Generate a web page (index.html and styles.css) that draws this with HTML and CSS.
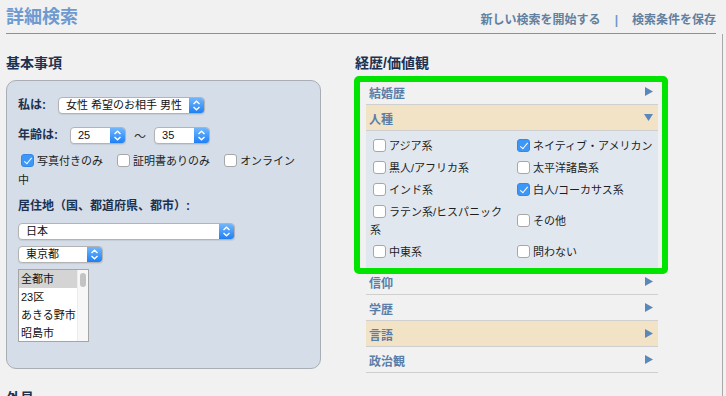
FILE: index.html
```html
<!DOCTYPE html>
<html lang="ja">
<head>
  <meta charset="UTF-8" />
  <title>詳細検索</title>
  <link rel="stylesheet" href="styles.css">
</head>
<body>
  <div class="wrap">

    <header class="topbar">
      <h1>詳細検索</h1>
      <nav class="links">
        <a href="#">新しい検索を開始する</a><span class="sep">|</span><a href="#">検索条件を保存</a>
      </nav>
    </header>

    <div class="columns">
      <!-- Basic info -->
      <section class="col-left">
        <h2>基本事項</h2>
        <div class="panel">
          <div class="field">
            <span class="lbl">私は:</span>
            <div class="select w-me">
              <span class="val">女性 希望のお相手 男性</span>
              <span class="step"><svg width="15" height="15" viewBox="0 0 15 15"><path d="M4.5 6 L7.5 3.2 L10.5 6 M4.5 9 L7.5 11.8 L10.5 9" /></svg></span>
            </div>
          </div>

          <div class="field">
            <span class="lbl">年齢は:</span>
            <div class="select w-age">
              <span class="val">25</span>
              <span class="step"><svg width="15" height="15" viewBox="0 0 15 15"><path d="M4.5 6 L7.5 3.2 L10.5 6 M4.5 9 L7.5 11.8 L10.5 9" /></svg></span>
            </div>
            <span class="tilde">～</span>
            <div class="select w-age">
              <span class="val">35</span>
              <span class="step"><svg width="15" height="15" viewBox="0 0 15 15"><path d="M4.5 6 L7.5 3.2 L10.5 6 M4.5 9 L7.5 11.8 L10.5 9" /></svg></span>
            </div>
          </div>

          <div class="checks">
            <label class="chk"><input type="checkbox" checked>写真付きのみ</label>
            <label class="chk"><input type="checkbox">証明書ありのみ</label>
            <label class="chk"><input type="checkbox">オンライン中</label>
          </div>

          <div class="lbl loc">居住地（国、都道府県、都市）:</div>

          <div class="select w-country">
            <span class="val">日本</span>
            <span class="step"><svg width="15" height="15" viewBox="0 0 15 15"><path d="M4.5 6 L7.5 3.2 L10.5 6 M4.5 9 L7.5 11.8 L10.5 9" /></svg></span>
          </div>
          <div class="select w-pref">
            <span class="val">東京都</span>
            <span class="step"><svg width="15" height="15" viewBox="0 0 15 15"><path d="M4.5 6 L7.5 3.2 L10.5 6 M4.5 9 L7.5 11.8 L10.5 9" /></svg></span>
          </div>

          <div class="listbox">
            <div class="opts">
              <div class="opt sel">全都市</div>
              <div class="opt">23区</div>
              <div class="opt">あきる野市</div>
              <div class="opt">昭島市</div>
            </div>
            <div class="sbar"><span class="thumb"></span></div>
          </div>
        </div>

        <h2 class="next">外見</h2>
      </section>

      <!-- Background / values -->
      <section class="col-right">
        <h2>経歴/価値観</h2>
        <div class="acc">
          <div class="acc-row"><span>結婚歴</span><svg class="tri" width="8" height="9" viewBox="0 0 8 9"><polygon points="0,0 8,4.5 0,9" /></svg></div>
          <div class="acc-row hl"><span>人種</span><svg class="tri" width="9" height="7" viewBox="0 0 9 7"><polygon points="0,0 9,0 4.5,7" /></svg></div>
          <div class="acc-body">
            <label><input type="checkbox">アジア系</label>
            <label><input type="checkbox" checked>ネイティブ・アメリカン</label>
            <label><input type="checkbox">黒人/アフリカ系</label>
            <label><input type="checkbox">太平洋諸島系</label>
            <label><input type="checkbox">インド系</label>
            <label><input type="checkbox" checked>白人/コーカサス系</label>
            <label><input type="checkbox">ラテン系/ヒスパニック系</label>
            <label><input type="checkbox">その他</label>
            <label><input type="checkbox">中東系</label>
            <label><input type="checkbox">問わない</label>
          </div>
          <div class="acc-row"><span>信仰</span><svg class="tri" width="8" height="9" viewBox="0 0 8 9"><polygon points="0,0 8,4.5 0,9" /></svg></div>
          <div class="acc-row"><span>学歴</span><svg class="tri" width="8" height="9" viewBox="0 0 8 9"><polygon points="0,0 8,4.5 0,9" /></svg></div>
          <div class="acc-row hl"><span>言語</span><svg class="tri" width="8" height="9" viewBox="0 0 8 9"><polygon points="0,0 8,4.5 0,9" /></svg></div>
          <div class="acc-row"><span>政治観</span><svg class="tri" width="8" height="9" viewBox="0 0 8 9"><polygon points="0,0 8,4.5 0,9" /></svg></div>

          <!-- highlight frame drawn over the first two sections -->
          <div class="highlight"></div>
        </div>
      </section>
    </div>

  </div>
</body>
</html>
```

FILE: styles.css
```css
body {
  margin: 0;
  background-color: #f1f1f1;
  font-family: "Liberation Sans", "Noto Sans CJK JP", sans-serif;
  color: #222;
}

.wrap {
  padding: 0 10px 0 6px;
}

/* Top bar */
.topbar {
  height: 33px;
  border-bottom: 1px solid #6d97c9;
  display: flex;
  justify-content: space-between;
  align-items: center;
}

.topbar h1 {
  margin: 0;
  font-size: 18px;
  line-height: 22px;
  color: #6f9ad0;
}

.links {
  font-size: 12px;
  font-weight: bold;
  padding-top: 3px;
}

.links a {
  color: #62809f;
  text-decoration: none;
}

.sep {
  margin: 0 14px;
  color: #6d97c9;
}

/* Columns */
.columns {
  display: flex;
  align-items: flex-start;
  padding-top: 19px;
  margin-right: -7px;
  border-right: 1px solid #a8a8a8;
}

h2 {
  margin: 0;
  font-size: 14px;
  line-height: 20px;
  color: #1d3150;
}

.col-left {
  width: 315px;
}

.col-right {
  flex: 1;
  margin-left: 34px;
}

/* Basic info panel */
.panel {
  box-sizing: border-box;
  height: 289px;
  margin-top: 7px;
  padding: 16px 12px 0 11px;
  background-color: #d5dee8;
  border: 1px solid #a9aeb5;
  border-radius: 10px;
}

.field {
  display: flex;
  align-items: center;
  height: 17px;
}

.field + .field {
  margin-top: 13px;
}

.lbl {
  font-size: 12px;
  font-weight: bold;
  line-height: 17px;
  color: #1d3150;
  margin-right: 12px;
}

.select {
  box-sizing: border-box;
  display: flex;
  height: 17px;
  background: #fff;
  border: 1px solid #b3b3b3;
  border-radius: 4px;
  box-shadow: 0 1px 1px rgba(0, 0, 0, 0.08);
  overflow: hidden;
}

.select .val {
  flex: 1;
  padding-left: 7px;
  font-size: 11px;
  line-height: 15px;
  color: #111;
  white-space: nowrap;
  overflow: hidden;
}

.step {
  width: 15px;
  display: flex;
  align-items: center;
  background: linear-gradient(#71b6fc, #1e80f6);
}

.step path {
  fill: none;
  stroke: #fff;
  stroke-width: 1.4;
}

.w-me { width: 147px; }
.w-age { width: 56px; }
.w-country { width: 217px; margin-top: 9px; }
.w-pref { width: 85px; margin-top: 6px; }

.tilde {
  margin: 0 8px;
  font-size: 12px;
  color: #333;
}

.checks {
  width: 282px;
  margin-top: 8px;
  font-size: 11px;
  line-height: 19px;
  color: #1d1d1d;
}

.chk {
  margin-right: 8px;
}

input[type="checkbox"] {
  appearance: none;
  -webkit-appearance: none;
  position: relative;
  box-sizing: border-box;
  width: 13px;
  height: 13px;
  margin: 0 3px 0 3px;
  vertical-align: -2px;
  background: #fff;
  border: 1px solid #a7a7a7;
  border-radius: 3px;
}

input[type="checkbox"]:checked {
  background: #3d97f7;
  border-color: #3389ea;
}

input[type="checkbox"]:checked::after {
  content: "";
  position: absolute;
  left: 3.5px;
  top: 0.5px;
  width: 3px;
  height: 7px;
  border: solid #fff;
  border-width: 0 1.7px 1.7px 0;
  transform: rotate(40deg);
}

.loc {
  display: block;
  margin-top: 8px;
  line-height: 16px;
}

.listbox {
  box-sizing: border-box;
  display: flex;
  width: 71px;
  height: 73px;
  margin-top: 6px;
  background: #fff;
  border: 1px solid #a5a5a5;
}

.opts {
  flex: 1;
}

.opt {
  padding-left: 2px;
  font-size: 11px;
  line-height: 18px;
  color: #111;
  white-space: nowrap;
}

.opt.sel {
  background: #d4d4d4;
}

.sbar {
  box-sizing: border-box;
  width: 11px;
  padding: 3px 2px;
  background: #f7f7f7;
  border-left: 1px solid #ececec;
}

.thumb {
  display: block;
  height: 14px;
  border-radius: 3px;
  background: #c3c3c3;
}

h2.next {
  margin-top: 19px;
}

/* Accordion */
.acc {
  position: relative;
  width: 292px;
  margin: 6px 0 0 11px;
}

.acc-row {
  box-sizing: border-box;
  height: 26px;
  display: flex;
  align-items: center;
  justify-content: space-between;
  padding: 0 5px 0 3px;
  border-bottom: 1px solid #cfcfcf;
}

.acc-row span {
  padding-top: 4px;
  font-size: 12px;
  font-weight: bold;
  line-height: 14px;
  color: #5a7ea8;
}

.acc-row.hl {
  background: #f3e3c6;
}

.tri {
  fill: #5b88b8;
}

.acc-body {
  display: grid;
  grid-template-columns: 136px 1fr;
  column-gap: 8px;
  align-items: center;
  padding: 4px 0 6px 4px;
  background: #e1e7ef;
  font-size: 11px;
  line-height: 18px;
  color: #1d1d1d;
}

.acc-body label {
  display: block;
  padding: 2px 0;
}

.highlight {
  position: absolute;
  top: -3px;
  left: -12px;
  box-sizing: border-box;
  width: 314px;
  height: 198px;
  border: 6px solid #00e400;
  border-radius: 5px;
  pointer-events: none;
}
```
